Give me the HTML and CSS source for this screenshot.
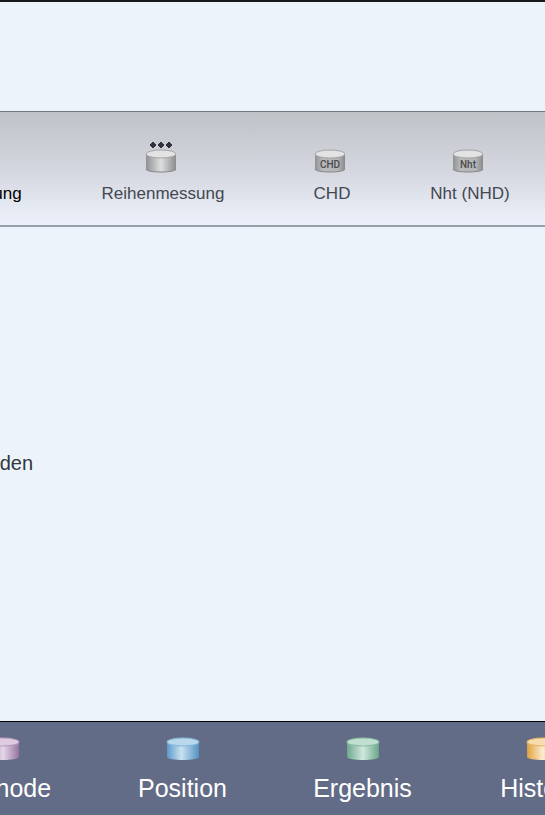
FILE: index.html
```html
<!DOCTYPE html>
<html lang="de">
<head>
  <meta charset="UTF-8">
  <meta name="viewport" content="width=device-width, initial-scale=1.0">
  <title>Reihenmessung</title>
  <link rel="stylesheet" href="styles.css">
</head>
<body>
  <!-- shared gradients and the sample body used by every icon -->
  <svg class="defs" aria-hidden="true">
    <defs>
      <linearGradient id="gray">
        <stop offset="0" stop-color="#8f9091"/>
        <stop offset=".5" stop-color="#dedfdf"/>
        <stop offset="1" stop-color="#8b8c8e"/>
      </linearGradient>
      <linearGradient id="label">
        <stop offset="0" stop-color="#909193"/>
        <stop offset=".25" stop-color="#b9babb"/>
        <stop offset=".75" stop-color="#b5b6b8"/>
        <stop offset="1" stop-color="#88898c"/>
      </linearGradient>
      <linearGradient id="purple">
        <stop offset="0" stop-color="#9b7ca6"/>
        <stop offset=".5" stop-color="#e6d7e8"/>
        <stop offset="1" stop-color="#96749f"/>
      </linearGradient>
      <linearGradient id="blue">
        <stop offset="0" stop-color="#5b9aca"/>
        <stop offset=".45" stop-color="#c9e1f0"/>
        <stop offset="1" stop-color="#5492c4"/>
      </linearGradient>
      <linearGradient id="green">
        <stop offset="0" stop-color="#70a890"/>
        <stop offset=".5" stop-color="#cfe9dc"/>
        <stop offset="1" stop-color="#6ba58a"/>
      </linearGradient>
      <linearGradient id="orange">
        <stop offset="0" stop-color="#dfa23c"/>
        <stop offset=".5" stop-color="#fdecd2"/>
        <stop offset="1" stop-color="#dc9e38"/>
      </linearGradient>
      <path id="side" d="M1 5V20C1 24 31 24 31 20V5Z"/>
    </defs>
  </svg>

  <header class="header"></header>

  <nav class="toolbar">
    <button class="tool active" type="button">
      <svg class="tool-icon" viewBox="0 0 32 34" aria-hidden="true">
        <use href="#side" y="9" fill="url(#gray)"/>
        <ellipse cx="16" cy="14" rx="15" ry="4" fill="#e3e3e3" stroke="#929394"/>
      </svg>
      <span>Einzelmessung</span>
    </button>
    <button class="tool" type="button">
      <svg class="tool-icon" viewBox="0 0 32 34" aria-hidden="true">
        <path d="M8 2l3 3-3 3-3-3zM16 2l3 3-3 3-3-3zM24 2l3 3-3 3-3-3z" fill="#30343a" stroke="#30343a"/>
        <use href="#side" y="9" fill="url(#gray)"/>
        <path d="M1 29C1 33 31 33 31 29" fill="none" stroke="#858687"/>
        <ellipse cx="16" cy="14" rx="15" ry="4" fill="#e3e3e3" stroke="#a3a4a6"/>
      </svg>
      <span>Reihenmessung</span>
    </button>
    <button class="tool" type="button">
      <svg class="tool-icon" viewBox="0 0 32 34" aria-hidden="true">
        <use href="#side" y="9" fill="url(#label)"/>
        <path d="M1 29C1 33 31 33 31 29" fill="none" stroke="#858687"/>
        <ellipse cx="16" cy="14" rx="15" ry="4" fill="#e3e3e3" stroke="#a3a4a6"/>
        <text class="icon-text" x="16" y="28">CHD</text>
      </svg>
      <span>CHD</span>
    </button>
    <button class="tool" type="button">
      <svg class="tool-icon" viewBox="0 0 32 34" aria-hidden="true">
        <use href="#side" y="9" fill="url(#label)"/>
        <path d="M1 29C1 33 31 33 31 29" fill="none" stroke="#858687"/>
        <ellipse cx="16" cy="14" rx="15" ry="4" fill="#e3e3e3" stroke="#a3a4a6"/>
        <text class="icon-text" x="16" y="28">Nht</text>
      </svg>
      <span>Nht (NHD)</span>
    </button>
  </nav>

  <main class="content">
    <p class="message">laden</p>
  </main>

  <nav class="tabs">
    <button class="tab" type="button">
      <svg class="tab-icon" viewBox="0 0 32 24" preserveAspectRatio="none" aria-hidden="true">
        <use href="#side" fill="url(#purple)"/>
        <ellipse cx="16" cy="5" rx="15" ry="4" fill="#dfcce3" stroke="#b79dbf"/>
      </svg>
      <span>Methode</span>
    </button>
    <button class="tab" type="button">
      <svg class="tab-icon" viewBox="0 0 32 24" preserveAspectRatio="none" aria-hidden="true">
        <use href="#side" fill="url(#blue)"/>
        <ellipse cx="16" cy="5" rx="15" ry="4" fill="#bad8ec" stroke="#86b6da"/>
      </svg>
      <span>Position</span>
    </button>
    <button class="tab" type="button">
      <svg class="tab-icon" viewBox="0 0 32 24" preserveAspectRatio="none" aria-hidden="true">
        <use href="#side" fill="url(#green)"/>
        <ellipse cx="16" cy="5" rx="15" ry="4" fill="#c0dfd0" stroke="#8dbda6"/>
      </svg>
      <span>Ergebnis</span>
    </button>
    <button class="tab" type="button">
      <svg class="tab-icon" viewBox="0 0 32 24" preserveAspectRatio="none" aria-hidden="true">
        <use href="#side" fill="url(#orange)"/>
        <ellipse cx="16" cy="5" rx="15" ry="4" fill="#f6dcae" stroke="#e3b566"/>
      </svg>
      <span>Historie</span>
    </button>
  </nav>
</body>
</html>
```

FILE: styles.css
```css
* {
  box-sizing: border-box;
}
body {
  margin: 0;
  min-height: 100vh;
  display: flex;
  flex-direction: column;
  overflow-x: hidden;
  font-family: "Liberation Sans", Arial, sans-serif;
  background-color: #ecf3fb;
  color: #32373f;
}
button {
  border: 0;
  padding: 0;
  background: none;
  font-family: inherit;
  white-space: nowrap;
  display: flex;
  flex-direction: column;
  align-items: center;
}
.defs {
  position: absolute;
  width: 0;
  height: 0;
}
.header {
  height: 111px;
  border-top: 2px solid #16181c;
}
.toolbar {
  display: grid;
  grid-template-columns: 194px 204px 134px 142px;
  justify-content: end;
  padding: 28px 4px 21px 0;
  overflow: hidden;
  border-top: 1px solid #70757f;
  border-bottom: 2px solid #9a9eaa;
  background: linear-gradient(#bfc2c7, #d3d6de 50%, #edf1fb);
}
.tool {
  gap: 10px;
  font-size: 17px;
  line-height: 20px;
  color: #434851;
}
.tool.active {
  color: #000;
}
.tool-icon {
  width: 32px;
  height: 34px;
  margin-right: 4px;
}
.icon-text {
  font-family: Roboto, "Liberation Sans", sans-serif;
  font-size: 10px;
  font-weight: 500;
  text-anchor: middle;
  fill: #484a4d;
}
.content {
  flex: 1;
  padding-top: 224px;
}
.message {
  width: 33px;
  margin: 0;
  display: flex;
  justify-content: flex-end;
  font-size: 20px;
  line-height: 24px;
}
.tabs {
  display: flex;
  justify-content: center;
  overflow: hidden;
  padding: 15px 0 12px;
  border-top: 1px solid #000;
  background-color: #636c86;
}
.tab {
  flex: 0 0 180px;
  gap: 12px;
  font-size: 25px;
  line-height: 30px;
  color: #fff;
}
.tab-icon {
  width: 34px;
  height: 24px;
}
```
